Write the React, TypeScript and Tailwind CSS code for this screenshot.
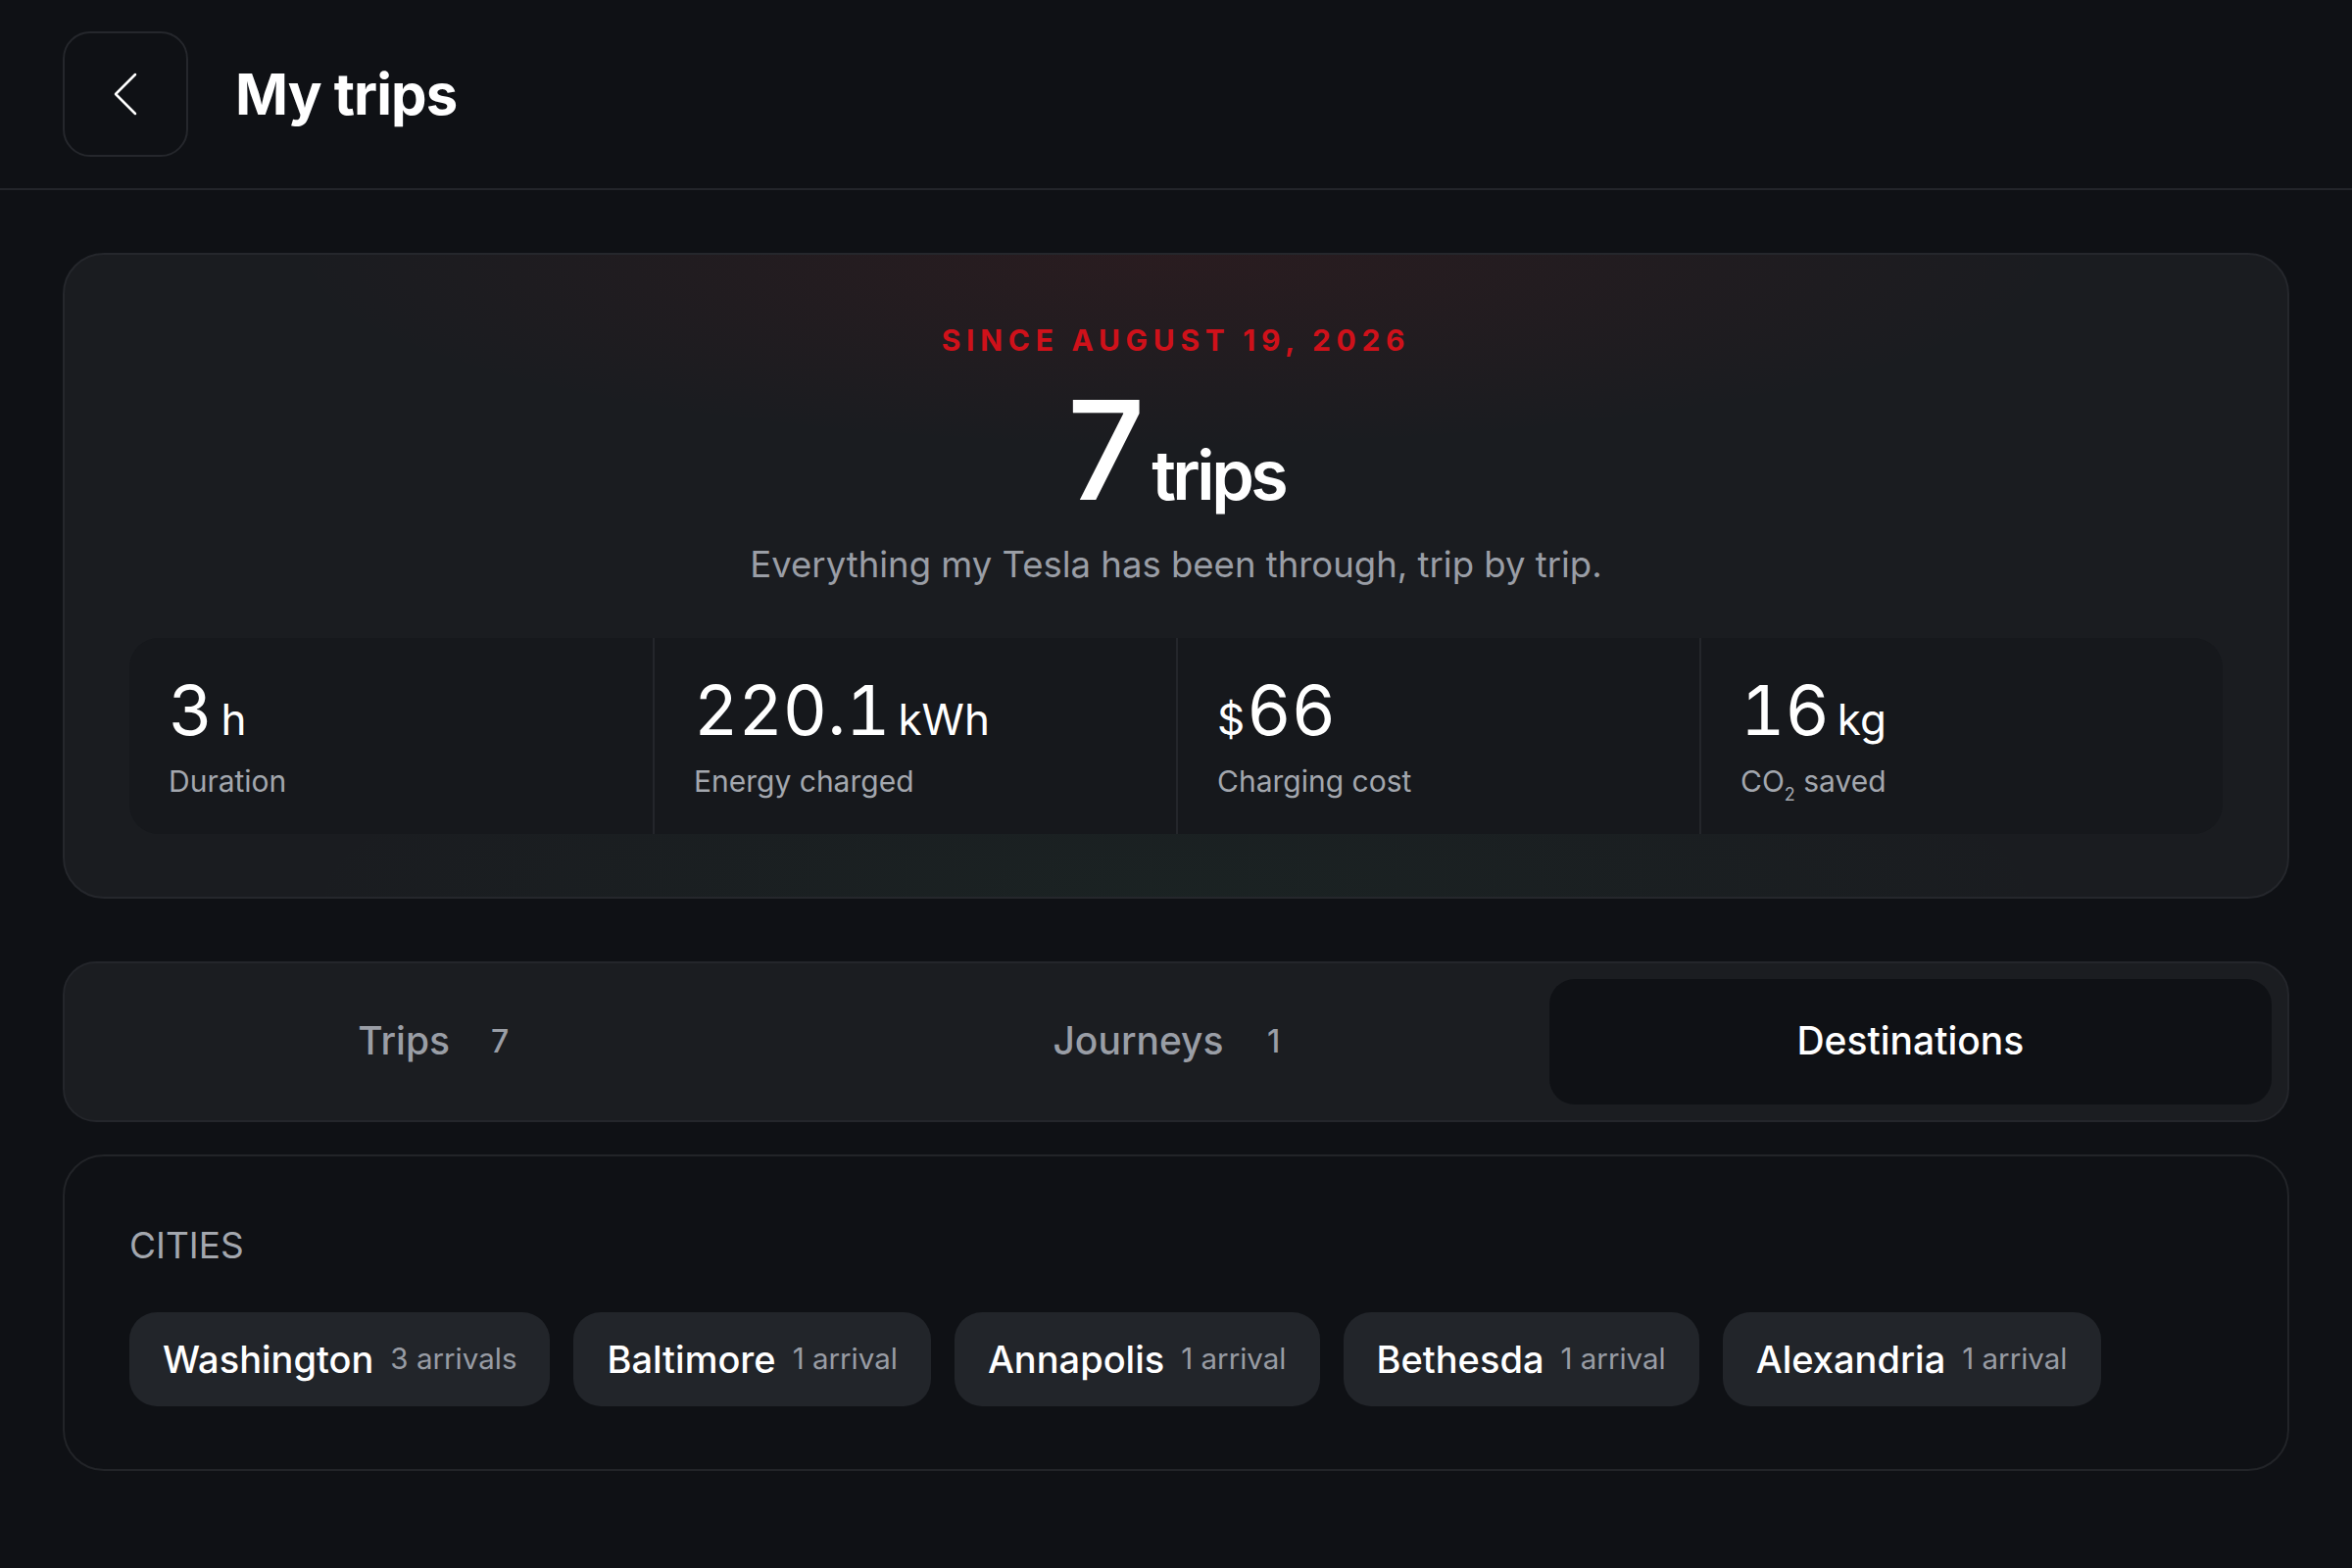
import React, { useState } from 'react';

type Stat = { value: string; unit?: string; prefix?: string; label: React.ReactNode };

const stats: Stat[] = [
  { value: '3', unit: 'h', label: 'Duration' },
  { value: '220.1', unit: 'kWh', label: 'Energy charged' },
  { value: '66', prefix: '$', label: 'Charging cost' },
  {
    value: '16',
    unit: 'kg',
    label: (
      <>
        CO<sub className="text-[0.6em] align-[-0.25em]">2</sub> saved
      </>
    ),
  },
];

const tabs = [
  { id: 'trips', name: 'Trips', count: 7 },
  { id: 'journeys', name: 'Journeys', count: 1 },
  { id: 'destinations', name: 'Destinations' },
];

const cities = [
  { name: 'Washington', arrivals: 3 },
  { name: 'Baltimore', arrivals: 1 },
  { name: 'Annapolis', arrivals: 1 },
  { name: 'Bethesda', arrivals: 1 },
  { name: 'Alexandria', arrivals: 1 },
];

export default function App() {
  const [tab, setTab] = useState('destinations');

  return (
    <main className="min-h-[1600px] bg-[#0f1115] text-white font-['Inter','Liberation_Sans',sans-serif]">
      {/* Top bar */}
      <header className="flex items-center gap-12 px-16 py-8 border-b-2 border-[#23252a]">
        <button className="flex size-[128px] items-center justify-center rounded-[28px] border-2 border-[#25272c] bg-[#0f1115]">
          <svg width="26" height="44" viewBox="0 0 26 44" fill="none">
            <polyline points="23,2 3,22 23,42" stroke="#fff" strokeWidth="2.5" strokeLinecap="round" strokeLinejoin="round" />
          </svg>
        </button>
        <h1 className="text-[58px] font-bold tracking-[-0.015em] leading-none">My trips</h1>
      </header>

      <div className="px-16 pt-16">
        {/* Summary */}
        <section className="rounded-[42px] border-2 border-[#25272c] bg-[#1a1c20] bg-[radial-gradient(ellipse_40%_30%_at_50%_0%,rgba(200,30,30,0.09),transparent),radial-gradient(ellipse_40%_30%_at_50%_100%,rgba(40,160,90,0.05),transparent)] px-[66px] pt-[72px] pb-16">
          <div className="text-center">
            <div className="text-[30px] font-bold tracking-[0.19em] text-[#cf111a] leading-none">
              SINCE AUGUST 19, 2026
            </div>
            <div className="mt-[34px] flex items-baseline justify-center gap-3">
              <span className="text-[140px] font-medium leading-[0.9] tracking-[-0.04em]">7</span>
              <span className="text-[70px] font-semibold leading-none tracking-[-0.05em]">trips</span>
            </div>
            <p className="mt-[36px] text-[36.5px] text-[#9a9ea6] leading-none">
              Everything my Tesla has been through, trip by trip.
            </p>
          </div>

          <div className="mt-[56px] grid grid-cols-4 rounded-[30px] bg-[#16181c] h-[200px]">
            {stats.map((s, i) => (
              <div
                key={i}
                className={`flex flex-col justify-center px-10 ${i > 0 ? 'border-l-2 border-[#24262b]' : ''}`}
              >
                <div className="flex items-baseline leading-none">
                  {s.prefix && <span className="text-[44px] mr-0.5">{s.prefix}</span>}
                  <span className="text-[70px] tabular-nums">{s.value}</span>
                  {s.unit && <span className="ml-2 text-[44px]">{s.unit}</span>}
                </div>
                <div className="mt-[22px] text-[30px] text-[#a3a7ae] leading-none">{s.label}</div>
              </div>
            ))}
          </div>
        </section>

        {/* Section switcher */}
        <nav className="mt-16 grid grid-cols-3 gap-3 rounded-[34px] border-2 border-[#24262b] bg-[#1b1d21] p-4">
          {tabs.map((t) => {
            const active = t.id === tab;
            return (
              <button
                key={t.id}
                onClick={() => setTab(t.id)}
                className={`flex h-[128px] items-center justify-center gap-[25px] rounded-[26px] text-[39px] font-medium ${
                  active ? 'bg-[#0f1115] text-white' : 'text-[#9a9ea6]'
                }`}
              >
                <span>{t.name}</span>
                {t.count !== undefined && (
                  <span className="min-w-[52px] text-center text-[32px]">{t.count}</span>
                )}
              </button>
            );
          })}
        </nav>

        {/* Destinations */}
        <section className="mt-[33px] rounded-[42px] border-2 border-[#222428] bg-[#0f1115] px-[66px] pt-[72px] pb-16">
          <h2 className="text-[37px] leading-none text-[#a3a7ae]">CITIES</h2>
          <div className="mt-[50px] flex flex-wrap gap-6">
            {cities.map((c) => (
              <div
                key={c.name}
                className="flex h-[96px] items-center gap-[17px] rounded-[28px] bg-[#22252a] px-[34px]"
              >
                <span className="text-[38px] font-medium leading-none">{c.name}</span>
                <span className="text-[29.5px] leading-none text-[#989ca4]">
                  {c.arrivals} {c.arrivals === 1 ? 'arrival' : 'arrivals'}
                </span>
              </div>
            ))}
          </div>
        </section>
      </div>
    </main>
  );
}
